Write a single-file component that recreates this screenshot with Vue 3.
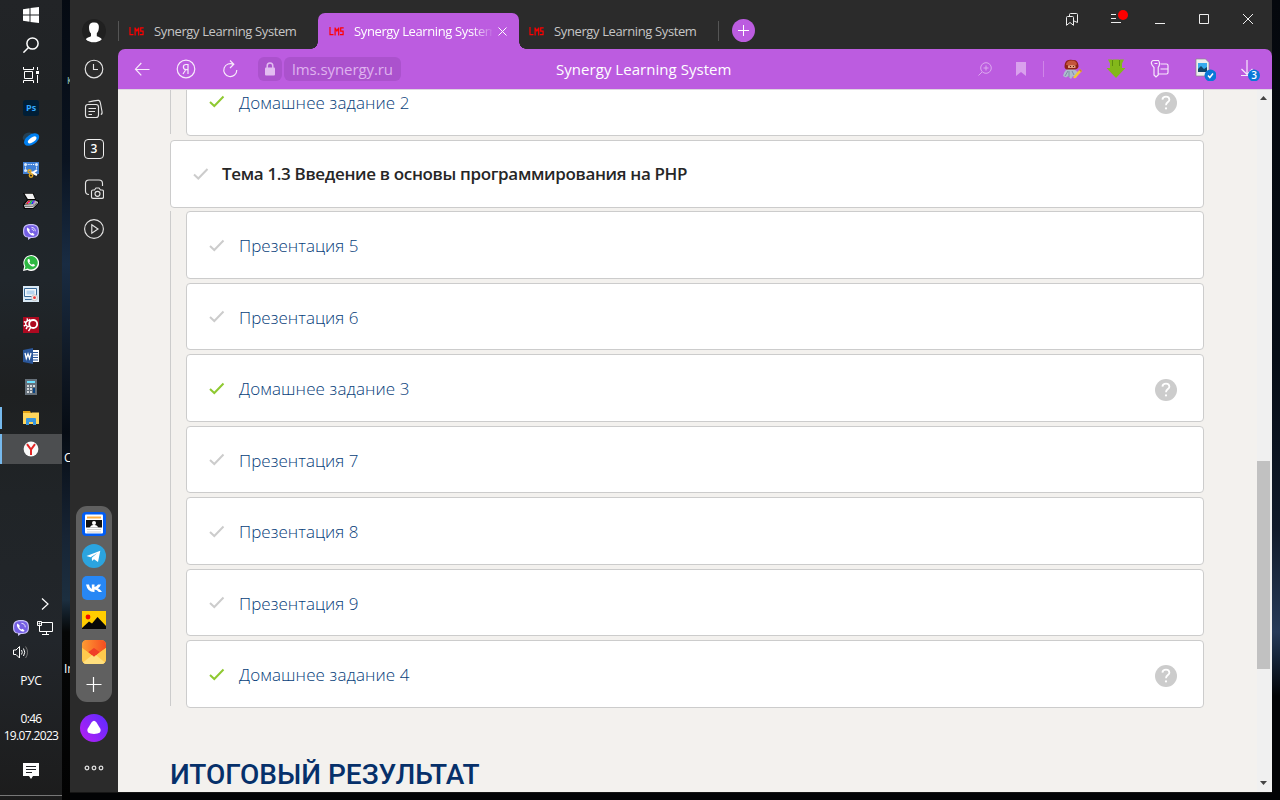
<script setup>
const lessons = [
  { title: 'Презентация 5' },
  { title: 'Презентация 6' },
  { title: 'Домашнее задание 3', done: true, help: true },
  { title: 'Презентация 7' },
  { title: 'Презентация 8' },
  { title: 'Презентация 9' },
  { title: 'Домашнее задание 4', done: true, help: true },
]
const previous = [{ title: 'Домашнее задание 2', done: true, help: true }]
const groups = [
  { items: previous },
  { heading: 'Тема 1.3 Введение в основы программирования на PHP', items: lessons },
]
const tabs = [{ id: 1 }, { id: 2, active: true }, { id: 3 }]
</script>

<template>
  <div class="desktop">
    <aside class="taskbar">
      <div class="slot"><svg width="16" height="16" viewBox="0 0 16 16" fill="#fff"><path d="M0 2.2 6.5 1.3V7.5H0zM7.5 1.1 16 0V7.5H7.5zM0 8.5H6.5V14.7L0 13.8zM7.5 8.5H16V16L7.5 14.9z"/></svg></div>
      <div class="slot"><svg width="16" height="16" viewBox="0 0 16 16" fill="none" stroke="#fff" stroke-width="1.5"><circle cx="9.5" cy="6.5" r="5.6"/><path d="M5.5 10.5 .4 15.6"/></svg></div>
      <div class="slot"><svg width="16" height="16" viewBox="0 0 16 16" fill="none" stroke="#fff"><path d="M.5 0V2.5H10.5V0M.5 16V13.5H10.5V16M1.5 4.5H9.5V11.5H1.5zM14.5 0V3M14.5 8V16"/><path d="M13 4h3v3h-3z" fill="#fff" stroke="none"/></svg></div>
      <div class="slot first"><svg width="16" height="16" viewBox="0 0 16 16"><rect width="16" height="16" rx="2.5" fill="#001e36"/><text x="3" y="11" class="ps">Ps</text></svg></div>
      <div class="slot"><svg width="18" height="16" viewBox="0 0 18 16"><ellipse cx="6" cy="5.6" rx="5.4" ry="3.8" transform="rotate(-30 6 6)" fill="#234055"/><ellipse cx="9.2" cy="8.8" rx="8.4" ry="5" transform="rotate(-34 9 8)" fill="#0080f2"/><ellipse cx="10.2" cy="9" rx="5" ry="2.3" transform="rotate(-36 10 9)" fill="#fff"/></svg></div>
      <div class="slot"><svg width="16" height="16" viewBox="0 0 16 16"><path d="M0 0H16V12H0z" fill="#3f7fd5"/><path d="M3 2.5H13M3 8.5H8M2.5 3V8M13.5 3V7" stroke="#fff" stroke-dasharray="1.3 1"/><g fill="#d6e6fa"><circle cx="2.5" cy="2.5" r="1.5"/><circle cx="13.5" cy="2.5" r="1.5"/><circle cx="2.5" cy="8.5" r="1.5"/></g><path d="M8 10 14 13M8 12l6-4" stroke="#fff" stroke-width="2"/><g fill="none" stroke="#e0a51f" stroke-width="1.4"><circle cx="6.5" cy="9.2" r="1.5"/><circle cx="8" cy="13.5" r="1.7"/></g></svg></div>
      <div class="slot"><svg width="16" height="16" viewBox="0 0 16 16"><path d="M0 0H10.5L13 7 16 7.5V10L10.5 16H1L0 13.5V11L4 7z" fill="#050505"/><path d="M1.5.8H9.8L12 6H4.8z" fill="#f2f2f2"/><path d="M1.5 11.5 5 7.5H12.5L15 9 10 12z" fill="#b9b9b9"/><path d="M5.5 7.5h2l-2.3 3.5H3z" fill="#e32020"/><path d="M8 7.5h1.6l-2 3.5H6z" fill="#10c548"/><path d="M10 7.5h2l-2 3.5H8z" fill="#1638e8"/><path d="M5 9h2v1H5zM10 8.5h2v1h-2z" fill="#e03bd4"/><path d="M1 12H10L15 8.8V10L10 15H2z" fill="#d5d5d5"/><path d="M2 13.3h8l4-3" stroke="#444" stroke-width=".8" fill="none"/></svg></div>
      <div class="slot"><svg width="16" height="16" viewBox="0 0 16 16"><path d="M8 0C14 0 16 2 16 7.5S13 14 8 14L5 16V13.6C1 12.9 0 11 0 7.2 0 2 2 0 8 0z" fill="#c7bff6"/><path d="M8 1.2C13 1.2 14.8 2.6 14.8 7.3S13 13 8 13C3 13 1.2 12 1.2 7.2 1.2 2.6 3 1.2 8 1.2z" fill="#755fe5"/><path d="M4.6 3.5C3 4.6 4.2 7.8 7 10.2c2 1.7 4 2 4.5.2L9.6 8.8 8.4 9.5C7.2 9 6.4 7.8 6.2 6.9L7 5.9z" fill="#fff"/><path d="M8.4 3.3c2.5.2 3.8 1.6 3.9 4M8.7 5.1c1.2.2 1.8.9 1.8 2" fill="none" stroke="#fff" stroke-width=".8"/></svg></div>
      <div class="slot"><svg width="16" height="16" viewBox="0 0 16 16"><path d="M0 16 1.2 11.6A7.9 7.9 0 1 1 4.4 14.9z" fill="#fff"/><path d="M1.6 14.4 2.4 11.4A6.7 6.7 0 1 1 4.7 13.6z" fill="#2db842"/><path d="M5.3 4C3.8 5 4.6 7.7 7 9.9c2.4 2 4.7 2 5 .1L10 8.8l-1 1C7.7 9.2 6.8 8.2 6.4 7.2l.8-1L6.3 4z" fill="#fff"/></svg></div>
      <div class="slot"><svg width="16" height="16" viewBox="0 0 16 16"><path d="M0 0H16V16H0z" fill="#d9e9f5"/><path d="M1.5 2.5H13.5V10.5H1.5z" fill="#f4f8fb" stroke="#376998"/><path d="M3.5 4.5h8v4h-8z" fill="#b6d4ee"/><path d="M2 13.5H9" stroke="#376998"/><circle cx="11.5" cy="11.7" r="3" fill="#eee" stroke="#c5c5c5"/><circle cx="11.5" cy="11.7" r="1.4" fill="#ed3838"/></svg></div>
      <div class="slot"><svg width="16" height="16" viewBox="0 0 16 16"><path d="M0 0H16V16H0z" fill="#ad0920"/><g fill="none" stroke="#fff"><circle cx="10.2" cy="7" r="4" stroke-width="1.8"/><path d="M7.5 4.2A3 3 0 1 0 6.5 9.4" stroke-width="1.5"/><path d="M.8 4.6 3 5.6M.8 9l2-.8M4 1.4l.8 2.4M3 12l1.3-2M8 10 5.5 14.2M7 2 6.3 4" stroke-width="1.4"/></g></svg></div>
      <div class="slot"><svg width="16" height="16" viewBox="0 0 16 16"><path d="M9 2H16V14H9z" fill="#fff"/><path d="M10 4.5h5M10 7h5M10 9.5h5M10 12h5" stroke="#2b579a"/><path d="M0 2 10 0V16L0 14z" fill="#2b579a"/><path d="M2 5 3.3 10.5 5 6 6.5 10.5 8 5" fill="none" stroke="#fff" stroke-width="1.3"/></svg></div>
      <div class="slot"><svg width="12" height="16" viewBox="0 0 12 16"><path d="M0 0H12V16H0z" fill="#66717b"/><path d="M2 2h8v2H2z" fill="#6be1ff"/><path d="M2 6h2v2H2zM5 6h2v2H5zM8 6h2v2H8zM2 9h2v2H2zM5 9h2v2H5zM2 12h2v2H2zM5 12h2v2H5z" fill="#d3d8dc"/><path d="M8 9h2v5H8z" fill="#0a4482"/></svg></div>
      <div class="slot opened"><svg width="16" height="16" viewBox="0 0 16 16"><path d="M0 1H7L8 3H16V14H0z" fill="#e5a416"/><path d="M0 3H8L9 2.5h7V14H0z" fill="#ffd65c"/><path d="M3 15V9Q3 8 4 8h8q1 0 1 1v6h-3v-3H6v3z" fill="#3a96dd"/></svg></div>
      <div class="slot opened current"><svg width="16" height="16" viewBox="0 0 16 16"><circle cx="8" cy="8" r="7.4" fill="#fafafa"/><path d="M4 3.2 8 8.5 12 3.2M8 8V14" stroke="#e22626" stroke-width="2" fill="none"/></svg></div>

      <div class="tray">
        <div class="tray-row more"><svg width="8" height="12" viewBox="0 0 8 12" fill="none" stroke="#fff" stroke-width="1.2"><path d="M1 .5 7 6 1 11.5"/></svg></div>
        <div class="tray-row"><svg width="16" height="16" viewBox="0 0 16 16"><path d="M8 0C14 0 16 2 16 7.5S13 14 8 14L5 16V13.6C1 12.9 0 11 0 7.2 0 2 2 0 8 0z" fill="#c7bff6"/><path d="M8 1.2C13 1.2 14.8 2.6 14.8 7.3S13 13 8 13C3 13 1.2 12 1.2 7.2 1.2 2.6 3 1.2 8 1.2z" fill="#755fe5"/><path d="M4.6 3.5C3 4.6 4.2 7.8 7 10.2c2 1.7 4 2 4.5.2L9.6 8.8 8.4 9.5C7.2 9 6.4 7.8 6.2 6.9L7 5.9z" fill="#fff"/><path d="M8.4 3.3c2.5.2 3.8 1.6 3.9 4" fill="none" stroke="#fff" stroke-width=".8"/></svg>
          <svg width="16" height="14" viewBox="0 0 16 14" fill="none" stroke="#fff"><path d="M5 1.5H15.5V10.5H2.5V5M9.5 10.5V13M5 13.5H12M.5.5H4.5V4.5H.5z"/><path d="M2 2h1v1H2z"/></svg></div>
        <div class="tray-row"><svg width="16" height="14" viewBox="0 0 16 14" fill="none" stroke="#fff"><path d="M.5 5V9.5H3L6.5 13V1.5L3 5zM8.5 5Q10 7.2 8.5 9.5M10.5 3.5Q13 7.2 10.5 11"/><path d="M12.6 1.5Q16.5 7.2 12.6 13" stroke="#777"/></svg></div>
        <div class="lang">РУС</div>
        <div class="clock">0:46<br><span class="date">19.07.2023</span></div>
        <div class="notice"><svg width="16" height="16" viewBox="0 0 16 16"><path d="M0 0H16V13H10L8 16 6 13H0z" fill="#fff"/><path d="M3 3.5H13M3 6.5H13M3 9.5H9" stroke="#202225"/></svg></div>
        <div class="edge"></div>
      </div>
    </aside>

    <div class="wallpaper"><span class="w1">К</span><span class="w2">C</span><span class="w3">Ir</span></div>

    <main class="browser">
      <aside class="sidebar">
        <div class="side avatar"><svg width="24" height="24" viewBox="0 0 24 24"><circle cx="12" cy="12" r="12" fill="#202020"/><path d="M12 3.4C16 3.2 17.2 5.2 16.8 9.2c-.3 3-1.2 4-2 5v3c2.2.9 4.2 1.4 5 3-4 4.2-12 4.2-16 0 1-1.7 3-2 5.2-3v-2.6c-1.2-1-2-3-2-6C7 5 8.5 3.5 12 3.4z" fill="#fff"/></svg></div>
        <div class="side"><svg width="20" height="20" viewBox="0 0 20 20"><circle cx="10" cy="10" r="8.8"/><path d="M9.5 5V10.5H14"/></svg></div>
        <div class="side"><svg width="20" height="20" viewBox="0 0 20 20"><rect x="1.5" y="5.5" width="13" height="13" rx="2.5"/><path d="M4.5 9.5H12M4.5 12.5H11M4.5 15.5H8M4.5 3Q12 1 14.8 1.4 16 1.8 16.4 4L18 12.5Q18.5 15 16.8 15.5"/></svg></div>
        <div class="side"><div class="count">3</div></div>
        <div class="side"><svg width="20" height="20" viewBox="0 0 20 20"><path d="M5 15.5Q1.5 15.5 1.5 12V4.5Q1.5 1 5 1H15Q18.5 1 18.5 4.5V7M9 11H10.5L12 9H15L16.5 11H18Q19.5 11 19.5 12.5V18Q19.5 19.4 18 19.4H9Q7.5 19.4 7.5 18V12.5Q7.5 11 9 11z"/><circle cx="13.5" cy="14.8" r="2.5"/></svg></div>
        <div class="side"><svg width="20" height="20" viewBox="0 0 20 20"><circle cx="10" cy="10" r="9.4"/><path d="M7.8 5.8 14 10 7.8 14.2z"/></svg></div>

        <div class="dock">
          <svg viewBox="0 0 24 24"><rect width="24" height="24" rx="4" fill="#005cf5"/><rect x="3" y="2.5" width="18" height="19" rx="1" fill="#fff"/><path d="M5 4.5h14v2H5z" fill="#ffae42"/><path d="M4 8H20V15.5H4z" fill="#111"/><path d="M7.5 15.5Q9 12.8 12 12.8T16.5 15.5z" fill="#fff"/><circle cx="12" cy="11" r="2" fill="#fff"/><path d="M5 17.5h14M5 20h14" stroke="#ccc"/></svg>
          <svg viewBox="0 0 24 24"><circle cx="12" cy="12" r="12" fill="#2ba4df"/><path d="M4.5 12 18.3 6.8 16 18 12 15.2 10 17 9.8 13.7 15.4 9 8.6 13.2z" fill="#fff"/></svg>
          <svg viewBox="0 0 24 24"><rect width="24" height="24" rx="5" fill="#2787f5"/><path d="M4 8.5H7Q7.5 12 9.8 13V8.5h2.7V11Q14.5 10.7 16 8.5H19Q18 11 16 12.2 18.3 13.3 20 16H16.8Q15.2 13.8 12.5 13.5V16Q5.6 16.4 4 8.5z" fill="#fff"/></svg>
          <svg viewBox="0 0 24 24"><path d="M0 3H24V21H0z" fill="#ffcd00"/><path d="M0 20 7 13.5 10 15.5 15.5 9 24 18V21H0z" fill="#080808"/><circle cx="6" cy="9" r="2.4" fill="#f10b00"/></svg>
          <svg viewBox="0 0 24 24"><defs><linearGradient id="mail"><stop stop-color="#ff9b32"/><stop offset="1" stop-color="#f54c21"/></linearGradient></defs><rect width="24" height="24" rx="5" fill="#ffc247"/><path d="M0 8V5Q0 0 5 0H19Q24 0 24 5V8L12 16.5z" fill="url(#mail)"/><path d="M6 12.2 12 8 18 12.2 12 16.5z" fill="#f03f28"/><path d="M0 8 12 16.5 24 8V19Q24 24 19 24H5Q0 24 0 19z" fill="#ffc94d"/><path d="M1 22.5 12 13.5 23 22.5Q21.500 24 19 24H5Q2.500 24 1 22.500z" fill="#ffdf7e"/><path d="M7.500 13 12 8.500 16.500 13 12 16.800z" fill="#f03f28"/></svg>
          <svg viewBox="0 0 24 24" fill="none" stroke="#fff" stroke-width="1.2"><path d="M4.5 12.5H19.5M11.5 5V20"/></svg>
        </div>
        <svg class="alice" width="28" height="28" viewBox="0 0 28 28"><defs><linearGradient id="al" x1="1" x2="0" y2=".8"><stop stop-color="#5a2bff"/><stop offset="1" stop-color="#b020f5"/></linearGradient></defs><circle cx="14" cy="14" r="14" fill="url(#al)"/><path d="M11.5 8.5Q14 5.2 16.5 8.5L20.5 15Q22 19.8 14 20 6 19.8 7.5 15z" fill="#fff"/></svg>
        <svg class="dots" width="20" height="6" viewBox="0 0 20 6" fill="none" stroke="#ddd" stroke-width="1.3"><circle cx="3" cy="3" r="1.8"/><circle cx="10" cy="3" r="1.8"/><circle cx="17" cy="3" r="1.8"/></svg>
      </aside>

      <section class="window">
        <header class="tabs">
          <div v-for="t in tabs" :key="t.id" class="tab" :class="{ active: t.active }">
            <svg class="lms" width="15" height="9" viewBox="0 0 15 9" fill="none" stroke="#f00" stroke-width="1.2"><path d="M1 0V7.6H4.5M6.1 8.5V.5M9.700 8.500V.500M6.500 1.500 7.900 4 9.300 1.500M14.7.8H11.7V4.2H14.1V7.7H11"/></svg>
            <span class="tab-title">Synergy Learning System</span>
            <svg v-if="t.active" class="x" width="9" height="9" viewBox="0 0 9 9" stroke="#fff"><path d="M.5.5 8.5 8.5M8.5.5.5 8.5"/></svg>
          </div>
          <div class="sep"></div>
          <div class="plus"><svg width="12" height="12" viewBox="0 0 12 12" stroke="#fff"><path d="M5.500 0V11M0 5.500H11"/></svg></div>
          <div class="controls">
            <svg viewBox="0 0 14 14"><path d="M1.500 13.300V5.500Q1.500 4.500 2.500 4.500H7.500Q8.500 4.500 8.500 5.500V13.300L5 10.500zM4.500 4V2.500Q4.500 1.500 5.500 1.500H11.500Q12.500 1.500 12.500 2.500V10.500L9 9"/></svg>
            <svg viewBox="0 0 14 14"><path d="M2 2.5H7M2 6.5H7M2 10.5H12"/></svg>
            <svg viewBox="0 0 14 14"><path d="M2 11.5H12"/></svg>
            <svg viewBox="0 0 14 14"><path d="M2.5 2.5H11.5V11.5H2.5z"/></svg>
            <svg viewBox="0 0 14 14"><path d="M2 2 12 12M12 2 2 12"/></svg>
            <i class="alert"></i>
          </div>
        </header>

        <nav class="toolbar">
          <svg class="back" width="16" height="14" viewBox="0 0 16 14"><path d="M7.300 1 1.500 7.200 7.300 13.400M1.500 7.500H15.500"/></svg>
          <svg class="ya" width="20" height="20" viewBox="0 0 20 20"><circle cx="10" cy="10" r="8.8"/><path d="M12 15V5.5H10Q7.4 5.5 7.4 8T10 10.6H12M9.7 10.7 7 15"/></svg>
          <svg class="reload" width="16" height="18" viewBox="0 0 16 18"><path d="M14.800 10A6.5 6.5 0 1 1 11.500 4.400M8 .500 11.800 4.300 8 8"/></svg>
          <div class="lock"><svg width="10" height="14" viewBox="0 0 10 14"><path d="M2.2 6V4Q2.2 1 5 1T7.8 4V6" fill="none" stroke="#e2bdf1" stroke-width="1.5"/><rect y="5.5" width="10" height="8" rx="1" fill="#e2bdf1"/></svg></div>
          <div class="url">lms.synergy.ru</div>
          <div class="page-title">Synergy Learning System</div>
          <div class="tools">
            <svg width="14" height="14" viewBox="0 0 14 14" class="dim"><circle cx="8" cy="6" r="5.3"/><path d="M4 10 .5 13.5M8 3.5V8.5M5.5 6H10.5"/></svg>
            <svg width="10" height="14" viewBox="0 0 10 14" class="mark"><path d="M0 0H10V14L5 10 0 14z"/></svg>
            <div class="rule"></div>
            <svg width="20" height="20" viewBox="0 0 20 20" class="plain"><path d="M1 17 2.400 13 5 10H12L17 14 14 19 11 17 9 20 6 17 4 18.500z" fill="#aebccd"/><path d="M3 17 6 12M7 18V12M12 16 10 12" stroke="#7d8da6"/><path d="M2.500 8Q2.500 3 5 1.500T13.500 1.300Q16.500 3 16.500 7.500 16 10.500 12 10.500H7Q3 11 2.500 8z" fill="#8f2318"/><path d="M4 6Q4.500 1.400 9.500 1.500T15 5.500Q12 7.500 4 6z" fill="#c4553c"/><path d="M6 6.500Q10 5.500 13.500 6.500V9H6z" fill="#e39c7c"/><path d="M8 7.500h1M11 7.500h1" stroke="#5b1b10"/><path d="M11 18.500 18 10 20 12 13 19.500z" fill="#f4c832"/><path d="M18 10 20 12 19 13 17 11z" fill="#c9783a"/></svg>
            <svg width="20" height="20" viewBox="0 0 20 20" class="plain"><path d="M2 .500H6.500V3.500H7V.500h6V3.500h.500V.500H18L16 4.500V9H19.500L10 19 .5 9H4V4.500z" fill="#83b81a"/><path d="M6.5 1V7M13.5 1V7" stroke="#5e900d"/></svg>
            <svg width="20" height="20" viewBox="0 0 20 20"><path d="M3.500 1.500H8.500Q10.800 4.500 8.200 8.500V16L6 18 4 16V8.500Q.2 5 1.8 2.500 2.500 1.500 3.500 1.500zM4.500 4.500H7.500M10.500 5H16.5Q18 5 18 6.500V13.500Q18 15 16.5 15H8.500M10.5 10H18"/></svg>
            <svg width="22" height="24" viewBox="0 0 22 24" class="plain"><path d="M2 2H11.500L15 5.500V19H2z" fill="#eee" stroke="#888" stroke-width=".7"/><path d="M4 6H13V15H4z" fill="#36abed"/><path d="M4 12 7 9 10 12 13 10V15H4z" fill="#114568"/><circle cx="16.500" cy="18.500" r="6" fill="#0a78d8"/><path d="m14 18.500 1.8 2 3.200-4" fill="none" stroke="#fff" stroke-width="1.5"/></svg>
            <svg width="20" height="24" viewBox="0 0 20 24"><path d="M7 3V17.500M1.500 12 7 17.500 12.500 12M1 18.500H9"/><circle cx="14" cy="18.500" r="6" fill="#0a78d8" stroke="none"/><text x="11.2" y="22.200" class="dl">3</text></svg>
          </div>
        </nav>

        <div class="page">
          <div class="course">
            <template v-for="(g, i) in groups" :key="i">
              <article v-if="g.heading" class="card topic">
                <svg class="tick" width="16" height="13" viewBox="0 0 16 13"><path d="M1 6.500 5.3 10.500 14.5 1"/></svg>
                <h3>{{ g.heading }}</h3>
              </article>
              <div class="items">
                <article v-for="item in g.items" :key="item.title" class="card">
                  <svg class="tick" :class="{ done: item.done }" width="16" height="13" viewBox="0 0 16 13"><path d="M1 7 5.3 11 14.5 1.5"/></svg>
                  <a :class="{ home: item.help }">{{ item.title }}</a>
                  <svg v-if="item.help" class="help" width="22" height="22" viewBox="0 0 22 22"><circle cx="11" cy="11" r="11" fill="#ccc"/><path d="M7.4 7.6Q7.7 4.7 11 4.7T14.4 7.7C14.4 10 11 10.2 11 13.2" fill="none" stroke="#fff" stroke-width="1.8"/><circle cx="11" cy="16.4" r="1.1" fill="#fff"/></svg>
                </article>
              </div>
            </template>
            <h2>ИТОГОВЫЙ РЕЗУЛЬТАТ</h2>
          </div>
          <div class="scroll">
            <svg width="7" height="4" viewBox="0 0 7 4"><path d="M0 4H7L3.5 0z"/></svg>
            <div class="thumb"></div>
            <svg width="7" height="4" viewBox="0 0 7 4"><path d="M0 0H7L3.5 4z"/></svg>
          </div>
        </div>
      </section>
    </main>
    <div class="wallpaper right"></div>
  </div>
</template>

<style>
body { background: #020305; overflow: hidden; }
</style>
<style scoped>
* { box-sizing: border-box; }
svg { display: block; flex: none; }
.desktop { width: 1280px; height: 800px; display: flex; overflow: hidden; background: #020305; font-family: "Open Sans", "Noto Sans", sans-serif; }
.taskbar { width: 62px; height: 800px; flex: none; display: flex; flex-direction: column; background: linear-gradient(#222427 0, #202325 12%, #20262b 35%, #1e2021 49%, #202427 62%, #22262b 80%, #1c1c1c 100%); color: #fff; }
.slot { height: 30px; flex: none; display: flex; align-items: center; justify-content: center; border: 0 solid #76b9ed; }
.slot.first { margin-top: 3px; }
.slot.first, .slot.first ~ .slot { margin-bottom: 1px; }
.slot.opened { border-left-width: 2px; padding-right: 2px; background-clip: padding-box; }
.slot.opened:not(.current) { height: 22px; margin: 4px 0 5px; }
.slot.current { background: #4c4e50; }
.ps { font: bold 9px "Open Sans", sans-serif; fill: #31a8ff; }
.tray { margin-top: auto; height: 208px; display: flex; flex-direction: column; font-size: 12px; }
.tray-row { height: 24px; flex: none; display: flex; align-items: center; gap: 8px; padding-left: 13px; }
.tray-row.more { padding-left: 41px; }
.lang { height: 33px; line-height: 34px; text-align: center; letter-spacing: -.3px; }
.clock { margin-top: 13px; line-height: 17px; text-align: center; letter-spacing: -.65px; white-space: nowrap; }
.notice { margin-top: 19px; display: flex; justify-content: center; }
.edge { margin-top: auto; margin-bottom: 4px; height: 1px; background: #777; }
.wallpaper { width: 8px; height: 800px; flex: none; position: relative; overflow: hidden; background: linear-gradient(#050a12, #0a1320 20%, #192c43 33%, #101925 45%, #060c14 54%, #172434 67%, #1c2f40 75%, #050606 79%, #020202); font-size: 12px; color: #fff; }
.wallpaper span { position: absolute; left: 2px; }
.wallpaper .w1 { top: 74px; left: 5px; color: #a7d8c6; font-size: 9px; }
.wallpaper .w2 { top: 449px; }
.wallpaper .w3 { top: 660px; }
.right { background: linear-gradient(#05080d, #060d16 45%, #111a29 66%, #263a58 79%, #17263a 82%, #020305 87%); }
.browser { width: 1202px; height: 793px; display: flex; background: #2b2b2b; border-bottom: 1px solid #161616; }
.sidebar { width: 48px; display: flex; flex-direction: column; align-items: center; padding-top: 11px; }
.side { height: 40px; flex: none; display: flex; align-items: center; justify-content: center; }
.side.avatar { height: 38px; align-items: flex-start; padding-top: 8px; }
.side:not(.avatar) svg { fill: none; stroke: #e4e4e4; stroke-width: 1.15; }
.count { width: 20px; height: 20px; border: 1.5px solid #eee; border-radius: 4px; color: #fff; font: 600 12px/18px "Open Sans", sans-serif; text-align: center; }
.dock { width: 36px; height: 196px; margin-top: 257px; padding: 6px; border-radius: 11px; background: #606060; display: flex; flex-direction: column; gap: 8px; }
.dock svg { width: 24px; height: 24px; }
.alice { margin-top: 12px; }
.dots { margin-top: 23px; }
.window { width: 1154px; display: flex; flex-direction: column; }
.tabs { height: 49px; flex: none; display: flex; align-items: flex-end; position: relative; }
.tab { width: 200px; height: 36px; display: flex; align-items: center; padding-left: 11px; color: #c6c6c6; position: relative; }
.tab:first-child::before { content: ""; width: 1px; height: 20px; background: #555; position: absolute; left: 0; top: 8px; }
.tab.active { width: 201px; background: #bc5ce0; border-radius: 7px 7px 0 0; color: #fff; }
.tab.active::before, .tab.active::after { content: ""; position: absolute; bottom: 0; width: 7px; height: 7px; }
.tab.active::before { left: -7px; background: radial-gradient(circle at 0 0, transparent 6.5px, #bc5ce0 7px); }
.tab.active::after { right: -7px; background: radial-gradient(circle at 100% 0, transparent 6.5px, #bc5ce0 7px); }
.tab-title { margin-left: 10px; font-size: 13px; letter-spacing: -.38px; line-height: 18px; white-space: nowrap; }
.active .tab-title { width: 138px; overflow: hidden; mask-image: linear-gradient(90deg, #000 118px, transparent 140px); }
.x { margin-left: 6px; }
.tab:nth-child(3) { width: 199px; padding-left: 10px; }
.sep { width: 1px; height: 20px; margin: 0 13px 8px 0; background: #555; }
.plus { width: 23px; height: 23px; margin-bottom: 7px; border-radius: 50%; background: #bc5ce0; display: flex; align-items: center; justify-content: center; }
.controls { position: relative; margin-left: auto; margin-bottom: 23px; padding-right: 17px; display: flex; gap: 30px; }
.controls svg { width: 14px; height: 14px; fill: none; stroke: #eee; }
.alert { position: absolute; left: 53px; top: -2px; width: 10px; height: 10px; border-radius: 50%; background: #f00; }
.toolbar { height: 40px; flex: none; background: #bc5ce0; border-radius: 7px 7px 0 0; display: flex; align-items: center; position: relative; }
.toolbar svg:not(.plain) { fill: none; stroke: #f7eafb; stroke-width: 1.2; }
.back { margin-left: 16px; }
.ya { margin-left: 26px; }
.reload { margin-left: 26px; }
.lock { margin-left: 20px; width: 24px; height: 24px; border-radius: 6px; background: #ab52cd; display: flex; align-items: center; justify-content: center; }
.toolbar .lock svg { stroke: none; }
.toolbar .lock rect { fill: #e2bdf1; }
.url { margin-left: 2px; width: 117px; height: 24px; border-radius: 6px; padding-left: 8px; background: #ab52cd; color: #dfb3ef; font-size: 15px; letter-spacing: -.08px; line-height: 24px; }
.page-title { margin-left: 155px; color: #fff; font-size: 15px; letter-spacing: .04px; line-height: 22px; white-space: nowrap; }
.tools { margin-left: auto; padding-right: 12px; display: flex; align-items: center; gap: 24px; }
.toolbar .tools .dim { stroke: #dca9ee; stroke-width: 1; }
.toolbar .tools .mark { fill: #d9a1ed; stroke: none; margin-right: -1px; }
.rule { width: 1px; height: 16px; background: #cf85e8; margin: 0 -6px; }
.dl { font: 600 10px "Open Sans", sans-serif; fill: #fff; stroke: none; }
.page { height: 703px; flex: none; overflow: hidden; display: flex; background: #f3f1ee; border-top: 1px solid #ded6e0; }
.course { width: 1034px; flex: none; margin: -22px 0 0 52px; }
.items { margin-left: 0; padding-left: 15px; border-left: 1px solid #ccc; display: flex; flex-direction: column; gap: 4px; height: 495px; }
.items:first-child { height: 66px; }
.card { height: 67.5px; flex: none; border: 1px solid #ccc; border-radius: 4px; background: #fff; display: flex; align-items: center; padding: 0 26px 0 22px; }
.topic { margin: 6.4px 0 3.5px; }
.card a { margin: 2px 0 0 14px; font-size: 17px; font-weight: 300; color: #07407a; line-height: 24px; letter-spacing: .04px; }
.card a.home { letter-spacing: .12px; }
.card h3 { margin: 0 0 0 13px; font-size: 17px; line-height: 24px; font-weight: 600; color: #262626; letter-spacing: -.34px; white-space: nowrap; }
.tick { fill: none; stroke: #ccc; stroke-width: 2; }
.tick.done { stroke: #8fc931; }
.help { margin: 3px 0 0 auto; }
h2 { margin: 49px 0 0; font: 500 28px/40px Roboto, sans-serif; color: #06306a; white-space: nowrap; }
.scroll { width: 15px; margin-left: auto; background: #f0f0f0; display: flex; flex-direction: column; justify-content: space-between; align-items: center; padding: 6px 0 7px 2px; position: relative; }
.scroll svg { fill: #444; margin-right: 4px; }
.thumb { position: absolute; left: 0; top: 371px; width: 13px; height: 208px; background: #c1c1c1; }
</style>
